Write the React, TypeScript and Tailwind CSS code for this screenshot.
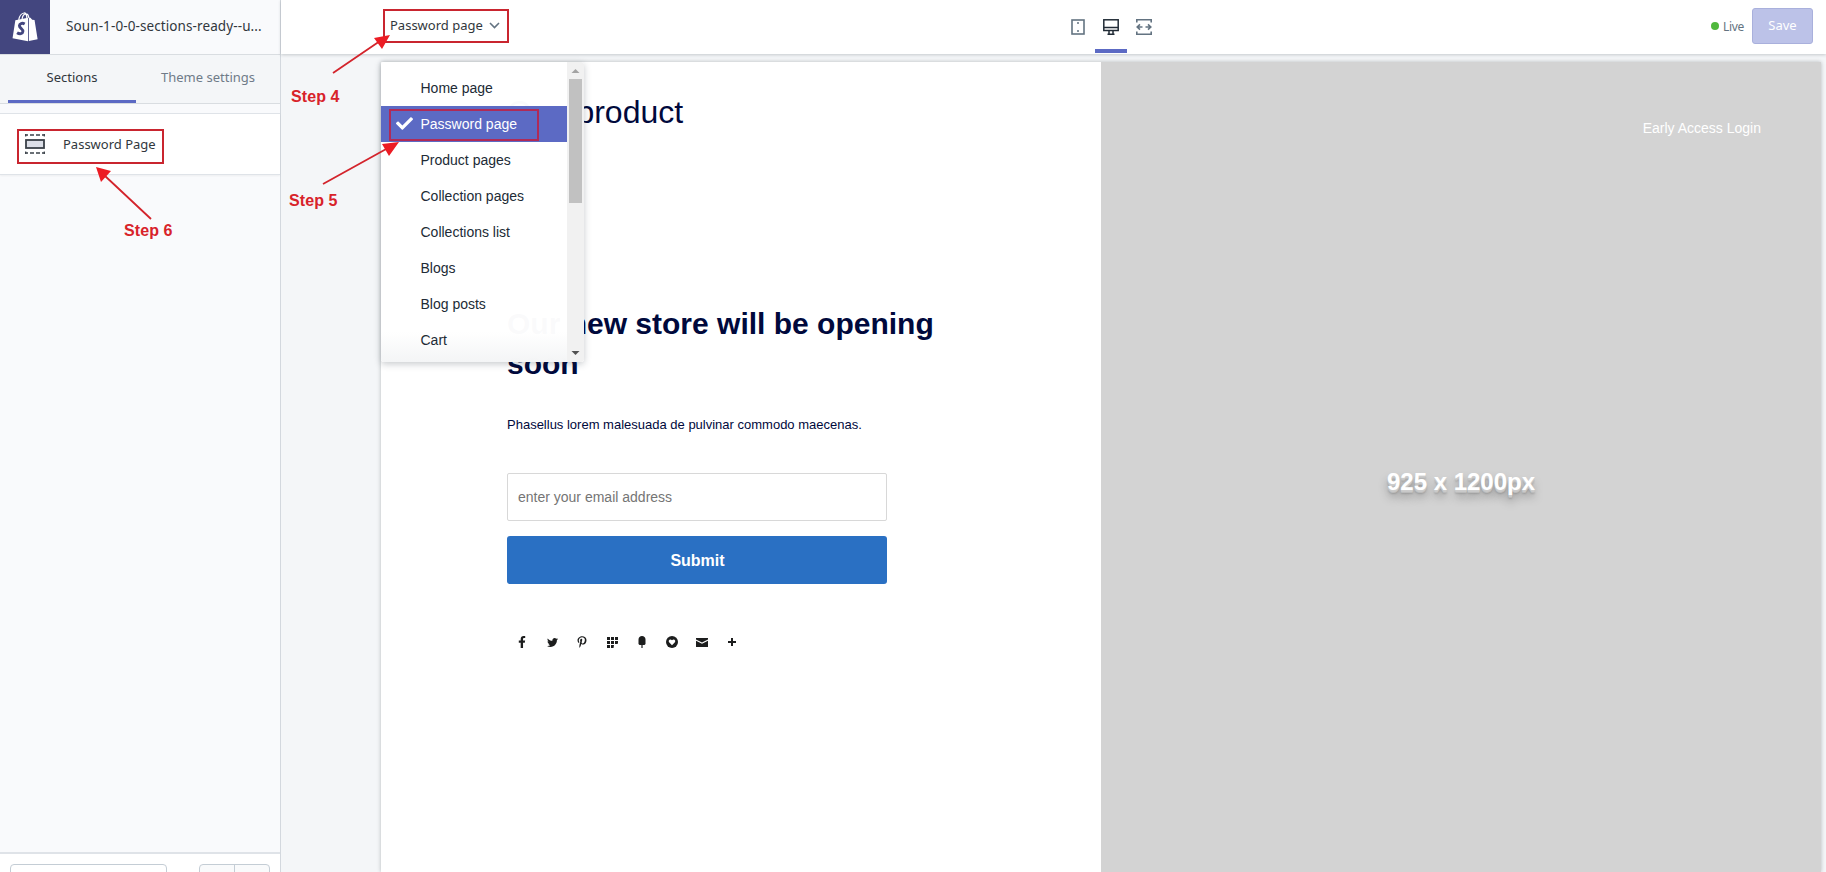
import React from "react";
import { FaFacebookF, FaTwitter, FaPinterestP, FaCheck } from "react-icons/fa";

const uiFont = "font-['Noto_Sans','Open_Sans',sans-serif]";
const arial = "font-['Liberation_Sans',Arial,sans-serif]";

const templates = [
  "Home page",
  "Password page",
  "Product pages",
  "Collection pages",
  "Collections list",
  "Blogs",
  "Blog posts",
  "Cart",
];

function ShopifyBag() {
  return (
    <svg width="27" height="31" viewBox="0 0 28 32" fill="none">
      <path
        d="M8 9.200C8.600 5.400 11 2.200 13.600 2c1.600-.1 2.600 1.800 2.900 5.400M11.500 8.200c.5-3 2-5.100 3.900-5.200 1.700-.1 2.700 1.600 3.100 4"
        stroke="#fff"
        strokeWidth="1.300"
      />
      <path d="M4.500 9.400 17.600 6.800V31.200L1.600 28.200Z" fill="#fff" />
      <path d="M18.500 6.700 20.200 7l1.800 1.900 2.400.3L27.600 29.100 18.500 31.100Z" fill="#fff" />
      <path
        d="M14.200 13.400c-2.700-1.500-5.300-.4-5.500 1.700-.2 2.500 4 3.200 3.600 6.100-.3 2.400-3.100 3.200-6 1.300"
        stroke="#43467f"
        strokeWidth="3"
      />
    </svg>
  );
}

function SectionIcon() {
  return (
    <svg className="-mt-px" width="20" height="20" viewBox="0 0 20 20" fill="none" stroke="#3a4149">
      <rect x="1" y="6" width="18" height="8" fill="#dcdfe8" strokeWidth="1.800" />
      <path d="M0 1h3M5 1h4M11 1h4M17 1h3M0 19h3M5 19h4M11 19h4M17 19h3" strokeWidth="1.600" />
      <path d="M.7 0v2.500M19.300 0v2.500M.7 17.500V20M19.300 17.500V20" strokeWidth="1.200" />
    </svg>
  );
}

function Sidebar() {
  return (
    <aside className="flex w-[281px] shrink-0 flex-col border-r border-[#d3d8de] bg-[#f9fafc]">
      <div className="flex h-[54px] shrink-0">
        <div className="flex w-[50px] items-center justify-center bg-[#43467f] pr-px pb-0.5">
          <ShopifyBag />
        </div>
        <div className="flex flex-1 items-center pb-0.5 pl-4 text-[13.5px] whitespace-nowrap text-[#31373d]">
          <span className="tracking-[0.1px]">Soun-1-0-0-sections-ready--u...</span>
        </div>
      </div>
      <div className="flex h-[50px] shrink-0 border-t border-b border-[#d9dde1] bg-[#f4f6f8] px-2 text-[13px]">
        <div className="flex w-32 items-center justify-center border-b-[3px] border-[#5c6ac4] pt-px text-[#31373d]">
          Sections
        </div>
        <div className="flex flex-1 items-center justify-center border-b-[3px] border-transparent pt-px pl-[8px] text-[#6f7b88]">
          Theme settings
        </div>
      </div>
      <div className="mt-[9px] flex h-[62px] shrink-0 items-center border-t border-b border-[#dfe3e8] bg-white pl-[25px] shadow-xs">
        <SectionIcon />
        <span className="mt-px ml-[18px] text-[13px] text-[#31373d]">Password Page</span>
      </div>
      <div className="flex-1" />
      <div className="flex h-5 shrink-0 items-start justify-between overflow-hidden border-t-2 border-[#dfe3e8] bg-white px-2.5 pt-[10px]">
        <div className="h-9 w-[157px] shrink-0 rounded border border-[#c4cdd5] bg-white" />
        <div className="flex h-9 w-[71px] shrink-0 rounded border border-[#c4cdd5] bg-[#f9fafb]">
          <div className="w-[35px] border-r border-[#c4cdd5]" />
        </div>
      </div>
    </aside>
  );
}

function TopBar() {
  return (
    <header className="flex h-[54px] shrink-0 bg-white shadow-[0_1px_3px_rgba(60,70,80,0.25)]">
      <div className="flex w-[780px] items-center pl-[109px] text-[13px] text-[#31373d]">
        <span className="-mt-0.5">Password page</span>
        <svg className="-mt-1 ml-[6px]" width="11" height="7" viewBox="0 0 11 7" fill="none" stroke="#637381" strokeWidth="1.600">
          <path d="M1 1l4.500 4.500L10 1" />
        </svg>
      </div>
      <div className="flex pb-px">
        <div className="flex w-[34px] items-center justify-center pr-px">
          <svg width="14" height="16" viewBox="0 0 14 16" fill="none" stroke="#637381" strokeWidth="1.600">
            <rect x="1" y="1" width="12" height="14" />
            <path d="M6 4h2M6 12h2" />
          </svg>
        </div>
        <div className="flex w-8 items-center justify-center border-b-4 border-[#5c6ac4] pt-1">
          <svg width="16" height="16" viewBox="0 0 16 16" fill="none" stroke="#212b36" strokeWidth="1.500">
            <rect x=".8" y=".8" width="14.400" height="10.700" />
            <path d="M1 8.500h14" />
            <path d="M6 11.500v3.700h4v-3.700M4.500 15.200h7" />
          </svg>
        </div>
        <div className="flex w-[33px] items-center justify-center">
          <svg width="16" height="16" viewBox="0 0 16 16" fill="none" stroke="#637381" strokeWidth="1.600">
            <path d="M.8 3.500V.8h14.400v2.700M.8 12.500v2.700h14.400v-2.700M4 5.300L1.200 8 4 10.700M12 5.300L14.800 8 12 10.700M1.200 8h5.300M9.500 8h5.300" />
          </svg>
        </div>
      </div>
      <div className="flex flex-1 items-center justify-end pr-[13px]">
        <span className="-mt-0.5 size-2 rounded-full bg-[#50b83c]" />
        <span className="-mt-px mr-[8px] ml-1 text-[12px] tracking-[-0.3px] text-[#637381]">Live</span>
        <button className="mb-0.5 h-9 w-[61px] rounded-[3px] border border-[#a9b0dc] bg-[#bcc2e8] text-[13px] text-white">
          Save
        </button>
      </div>
    </header>
  );
}

function TemplateMenu() {
  return (
    <div className={`absolute top-[62px] left-[381px] flex h-[300px] w-[203px] overflow-hidden rounded-[3px] bg-white/98 shadow-[0_2px_7px_rgba(33,43,54,0.25)] ${arial}`}>
      <ul className="flex-1 bg-linear-to-b from-transparent from-90% to-[#f4f5f6] pt-2 text-[14px] text-[#212b36]">
        {templates.map((name) =>
          name === "Password page" ? (
            <li key={name} className="flex h-9 items-center bg-[#5c6ac4] pl-[15px] text-white">
              <FaCheck className="-mt-0.5 mr-[7.500px]" size={17} />
              {name}
            </li>
          ) : (
            <li key={name} className="flex h-9 items-center pl-[39.500px]">
              {name}
            </li>
          ),
        )}
      </ul>
      <div className="flex w-[17px] flex-col items-center bg-[#f1f1f1]">
        <svg width="17" height="17" viewBox="0 0 17 17">
          <path d="M4.500 11h8L8.500 7z" fill="#a3a3a3" />
        </svg>
        <div className="h-[124px] w-[13px] bg-[#c1c1c1]" />
        <div className="flex-1" />
        <svg width="17" height="17" viewBox="0 0 17 17">
          <path d="M4.500 6h8L8.500 10z" fill="#505050" />
        </svg>
      </div>
    </div>
  );
}

function SocialLinks() {
  return (
    <div className="mt-[52px] flex items-center text-[#1c1d1d]">
      <div className="flex w-[30px] justify-center"><FaFacebookF size={12} /></div>
      <div className="flex w-[30px] justify-center"><FaTwitter size={11} /></div>
      <div className="flex w-[30px] justify-center"><FaPinterestP size={12} /></div>
      <div className="flex w-[30px] justify-center">
        <svg width="11" height="11" viewBox="0 0 11 11" fill="currentColor">
          <path d="M0 0h3v3H0zM4 0h3v3H4zM8 0h3v3H8zM0 4h3v3H0zM4 4h3v3H4zM8 4h3v2.500L10 7H8zM0 8h3v3H0zM4 8h3l-.5 3H4z" />
        </svg>
      </div>
      <div className="flex w-[30px] justify-center">
        <svg width="8" height="12" viewBox="0 0 8 12" fill="currentColor">
          <path d="M4 0C6 0 7.500 1.500 7.500 3.500V8L6.500 9H4.600V12H3.400V9H1.500L.5 8V3.500C.5 1.500 2 0 4 0Z" />
        </svg>
      </div>
      <div className="flex w-[30px] justify-center">
        <svg width="12" height="12" viewBox="0 0 12 12">
          <circle cx="6" cy="6" r="6" fill="currentColor" />
          <path d="M6 9.300 3.100 6.300C1.800 4.800 3.900 2.400 6 4.200 8.100 2.400 10.200 4.800 8.900 6.300Z" fill="#fff" />
        </svg>
      </div>
      <div className="flex w-[30px] justify-center">
        <svg width="12" height="9" viewBox="0 0 12 9" fill="currentColor">
          <path d="M0 0h12v1.500L6 4.600 0 1.500zM0 2.700l6 3.100 6-3.100V9H0z" />
        </svg>
      </div>
      <div className="flex w-[30px] justify-center">
        <svg width="8" height="8" viewBox="0 0 8 8" stroke="currentColor" strokeWidth="2">
          <path d="M0 4h8M4 0v8" />
        </svg>
      </div>
    </div>
  );
}

function Preview() {
  return (
    <div className={`mt-2 mr-[5px] ml-[100px] flex flex-1 overflow-hidden bg-white shadow-[0_0_4px_rgba(33,43,54,0.3)] ${arial}`}>
      <section className="w-[720px] pl-[126px] text-[#00093c]">
        <div className="mt-[30px] text-[32px] leading-[40px]">One product</div>
        <h1 className="mt-[172px] w-[460px] text-[30px] leading-10 font-bold">
          Our new store will be opening soon
        </h1>
        <p className="mt-[31px] text-[13px] leading-5">Phasellus lorem malesuada de pulvinar commodo maecenas.</p>
        <div className="mt-[38px] flex h-12 w-[380px] items-center rounded-[2px] border border-[#d8d8d8] pl-[10px] text-[14px] text-[#757575]">
          enter your email address
        </div>
        <button className="mt-[15px] h-12 w-[380px] rounded-[3px] bg-[#2a70c3] pt-0.5 pl-px text-[16px] font-bold text-white">
          Submit
        </button>
        <SocialLinks />
      </section>
      <section className="flex flex-1 flex-col items-center bg-[#d3d3d3]">
        <div className="mt-[56px] self-end pr-[60px] text-[14px] leading-5 text-white">Early Access Login</div>
        <div className="mt-[327px] text-[24px] leading-[34px] font-bold text-white [text-shadow:0_1px_0_#ccc,0_2px_0_#c9c9c9,0_3px_0_#bbb,0_4px_2px_rgba(0,0,0,.15),0_7px_10px_rgba(0,0,0,.35)]">
          925 x 1200px
        </div>
      </section>
    </div>
  );
}

function Annotations() {
  return (
    <div className={`pointer-events-none absolute inset-0 text-[16px] leading-5 font-bold tracking-[0.1px] text-[#d8232a] ${arial}`}>
      <div className="absolute top-[9px] left-[383px] h-[34px] w-[126px] border-2 border-[#c9252f]" />
      <div className="absolute top-[109px] left-[389px] h-8 w-[150px] border-2 border-[#b02a57]" />
      <div className="absolute top-[129px] left-[17px] h-[35px] w-[147px] border-2 border-[#c9252f]" />
      <svg className="absolute inset-0" width="600" height="260" fill="#ec1c24" stroke="#d3242c">
        <path d="M333 73 380 41M323 184 388 148M151 219 104 175" strokeWidth="1.800" />
        <path d="M390 35 382 49 374 38ZM399 142 389 156 382 144ZM96 167 111 171 101 182Z" stroke="none" />
      </svg>
      <span className="absolute top-[87px] left-[291px]">Step 4</span>
      <span className="absolute top-[191px] left-[289px]">Step 5</span>
      <span className="absolute top-[221px] left-[124px]">Step 6</span>
    </div>
  );
}

export default function App() {
  return (
    <div className={`relative flex h-[872px] w-[1826px] overflow-hidden bg-[#f4f6f8] ${uiFont}`}>
      <Sidebar />
      <main className="flex flex-1 flex-col">
        <TopBar />
        <Preview />
      </main>
      <TemplateMenu />
      <Annotations />
    </div>
  );
}
